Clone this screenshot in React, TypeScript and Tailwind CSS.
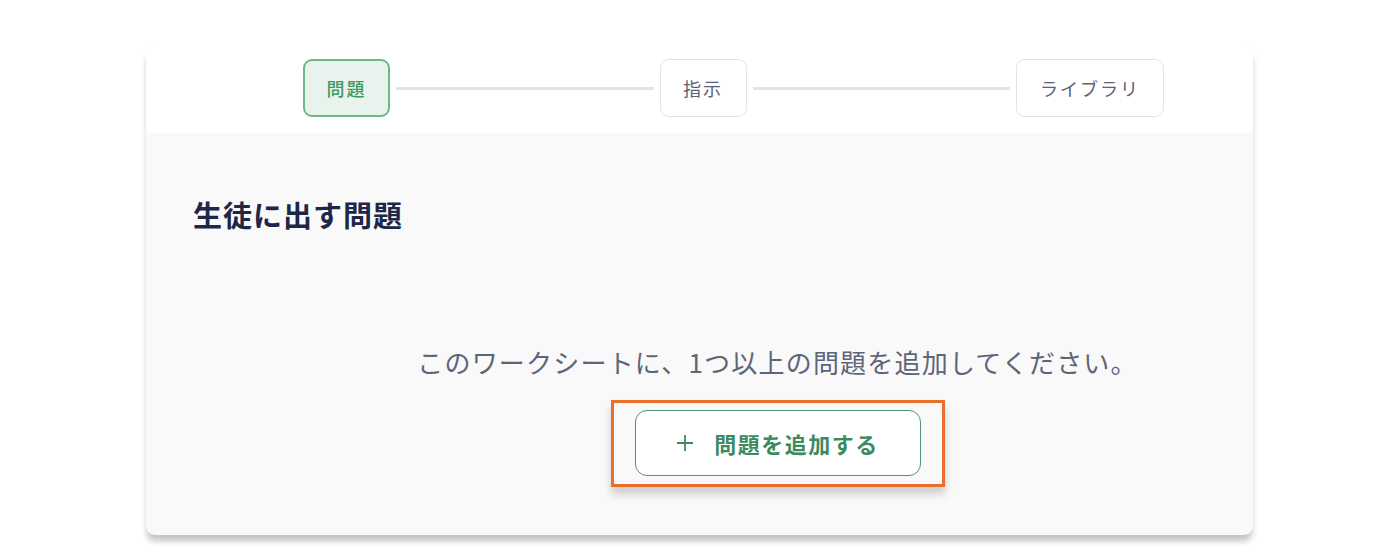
import React from "react";

const font = { fontFamily: '"Noto Sans CJK JP", "Noto Sans", sans-serif' };

function StepBox({ label, active, width }: { label: string; active?: boolean; width: string }) {
  return (
    <div
      className={`${width} h-[58px] shrink-0 rounded-[9px] flex items-center justify-center text-[18px] tracking-[2px] ${
        active
          ? "border-2 border-[#6cb88b] bg-[#e9f3ed] text-[#3f9a64] font-medium"
          : "border-[1.5px] border-[#e1e3ea] bg-white text-[#5b6276]"
      }`}
    >
      {label}
    </div>
  );
}

export default function App() {
  return (
    <div className="w-[1400px] h-[560px] bg-white overflow-hidden" style={font}>
      <div className="ml-[146px] mt-[46px] w-[1107px] rounded-[9px] bg-[#f9f9f9] shadow-[0_7px_6px_-1px_rgba(0,0,0,0.24)] overflow-hidden">
        {/* stepper */}
        <div className="bg-white pl-[157px] pr-[89px] pt-[13px] pb-[16px] flex items-center gap-[6px]">
          <StepBox label="問題" active width="w-[87px]" />
          <div className="flex-1 h-[3px] bg-[#e2e4e9]" />
          <StepBox label="指示" width="w-[87px]" />
          <div className="flex-1 h-[3px] bg-[#e2e4e9]" />
          <StepBox label="ライブラリ" width="w-[148px]" />
        </div>

        {/* body */}
        <div className="pt-[61px] pb-[48px]">
          <h2 className="pl-[47px] text-[29px] leading-[40px] font-bold tracking-[1px] text-[#1d2848]">
            生徒に出す問題
          </h2>
          <div className="mt-[110px] pl-[204px] pr-[48px] flex flex-col items-center">
            <p className="text-[26px] leading-[36px] tracking-[1.2px] text-[#5e6579]">
              このワークシートに、1つ以上の問題を追加してください。
            </p>
            <div className="mt-[20px] border-[3px] border-[#e8702b] px-[21px] pt-[7px] pb-[8px] shadow-[0_7px_8px_rgba(0,0,0,0.18)] bg-[#f9f9f9]">
              <button className="w-[286px] h-[66px] rounded-[12px] border-[1.5px] border-[#4f9474] bg-white flex items-center justify-center gap-[20px] text-[#3d8a61]">
                <svg width="18" height="18" viewBox="0 0 18 18" fill="none" stroke="currentColor" strokeWidth="1.8">
                  <path d="M9 1v16M1 9h16" />
                </svg>
                <span className="text-[22px] font-bold tracking-[1.5px]">問題を追加する</span>
              </button>
            </div>
          </div>
        </div>
      </div>
    </div>
  );
}
